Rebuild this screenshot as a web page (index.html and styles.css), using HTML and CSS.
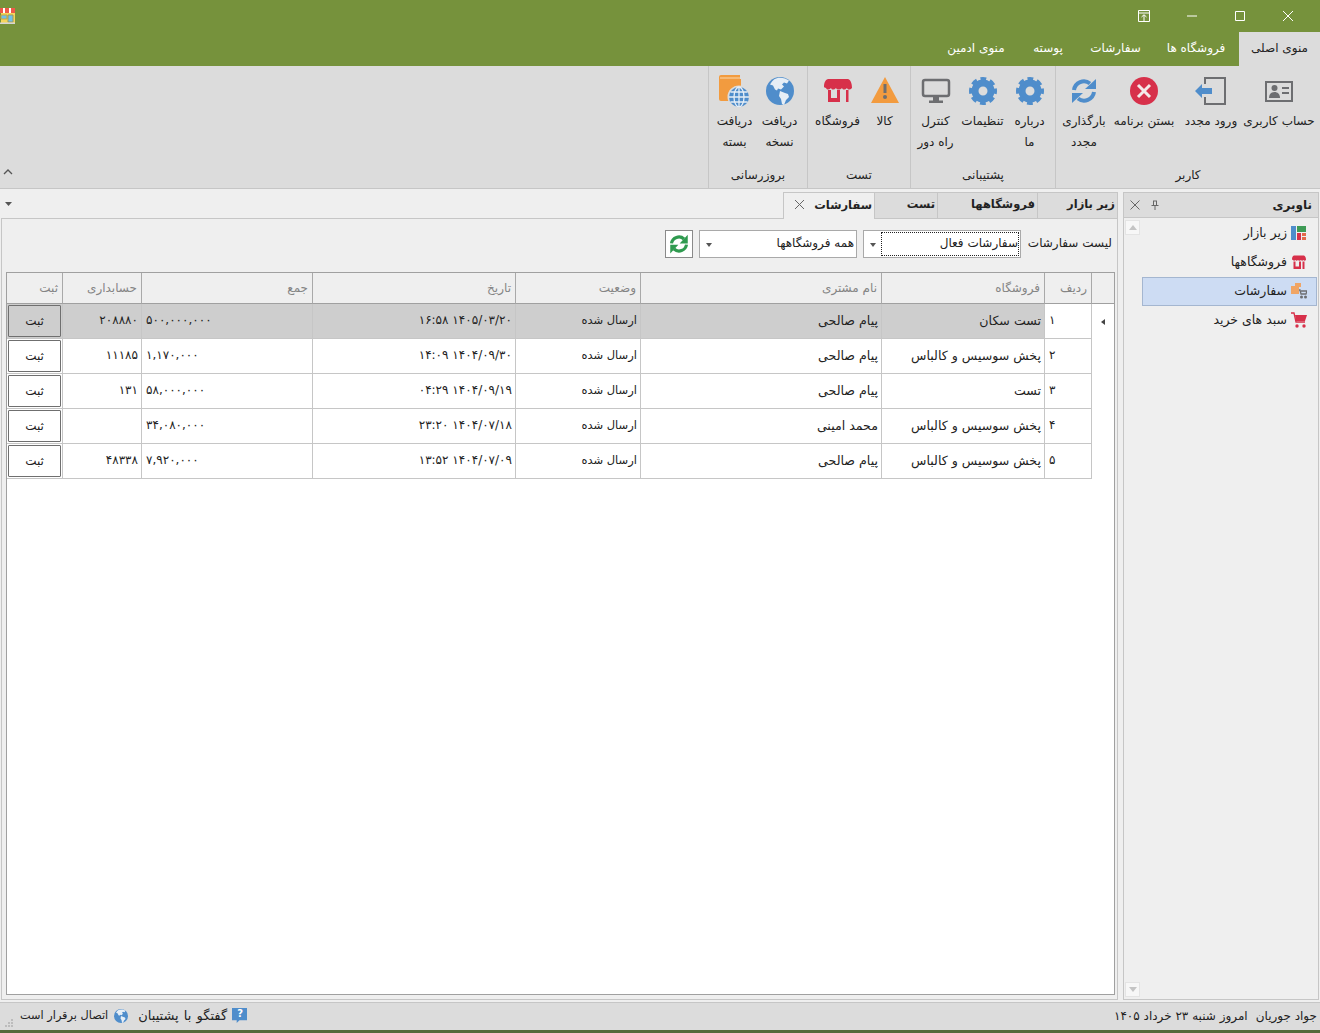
FILE: index.html
```html
<!DOCTYPE html>
<html lang="fa" dir="rtl">
<head>
<meta charset="utf-8">
<title>سفارشات</title>
<link rel="stylesheet" href="styles.css">
</head>
<body>
<svg class="defs" width="0" height="0" aria-hidden="true">
  <defs>
    <symbol id="i-card" viewBox="0 0 32 32"><rect x="3" y="7" width="26" height="19" fill="none" stroke="#6d6e71" stroke-width="2"/><circle cx="11.500" cy="13" r="3" fill="#6d6e71"/><path d="M6 23c0-4 2.500-6 5.500-6s5.500 2 5.500 6z" fill="#6d6e71"/><path d="M19 12h7v2h-7zM19 17h7v2h-7z" fill="#6d6e71"/></symbol>
    <symbol id="i-login" viewBox="0 0 32 32"><path d="M10 9V3h20v26H10v-7" fill="none" stroke="#6d6e71" stroke-width="2"/><path d="M0 16l7-7v4h10v6H7v4z" fill="#4f8dcb"/></symbol>
    <symbol id="i-close" viewBox="0 0 32 32"><circle cx="16" cy="16" r="14" fill="#d7304a"/><path d="M10 10l12 12M22 10L10 22" stroke="#f4e9e9" stroke-width="3" fill="none"/></symbol>
    <symbol id="i-refresh" viewBox="0 0 32 32"><g id="half"><path d="M6 15A10 10 0 0 1 22 8.500" fill="none" stroke="#4f8dcb" stroke-width="4"/><path d="M28 4v10H17z" fill="#4f8dcb"/></g><use href="#half" transform="rotate(180 16 16)"/></symbol>
    <symbol id="i-gear" viewBox="0 0 32 32"><circle cx="16" cy="16" r="8" fill="none" stroke="#4f8dcb" stroke-width="7"/><circle cx="16" cy="16" r="11.500" fill="none" stroke="#4f8dcb" stroke-width="5" stroke-dasharray="5.400 3.630" stroke-dashoffset="2.700"/></symbol>
    <symbol id="i-monitor" viewBox="0 0 32 32"><rect x="3" y="5" width="26" height="16" rx="2" fill="none" stroke="#6d6e71" stroke-width="2.500"/><path d="M13 22h6v3.500h-6zM9 25.500h14V28H9z" fill="#6d6e71"/></symbol>
    <symbol id="i-warn" viewBox="0 0 32 32"><path d="M16 2L30 28H2z" fill="#f29b3f"/><path d="M14.500 9h3v9h-3z" fill="#6d6e71"/><circle cx="16" cy="22" r="2" fill="#6d6e71"/></symbol>
    <symbol id="i-store" viewBox="0 0 32 32"><path d="M6 4h20c3 1 4 5 4 9-2 2-4 2-5 0-2 2-4 2-5 0-2 2-5 2-6 0-2 2-4 2-5 0-2 2-4 2-5 0-1 0-2-1-2-1 0-4 1-7 4-8z" fill="#d7304a"/><path d="M6 15h3v8h6v-8h3v12H6z" fill="#d7304a"/><path d="M24 15h2.500v12H24z" fill="#d7304a"/></symbol>
    <symbol id="i-store2" viewBox="0 0 32 32"><path d="M6 3h20c3 1 4 5 4 9-2 2-4 2-5 0-2 2-4 2-5 0-2 2-5 2-6 0-2 2-4 2-5 0-2 2-4 2-5 0-1 0-2-1-2-1 0-4 1-7 4-8z" fill="#d7304a"/><path d="M5 15h4v10h7V15h4v15H5z" fill="#d7304a"/><path d="M23 15h4v15h-4z" fill="#d7304a"/></symbol>
    <symbol id="i-globe" viewBox="0 0 32 32"><circle cx="16" cy="16" r="14" fill="#4f8dcb"/><path d="M10 4.500c3-2 7-2 11-1l4 2-2 3-3-1-2 2 2 2-3 3-3-1-1 2-2-1-2-4-3-1 2-3z" fill="#e6eef6"/><path d="M16 16l5 2 3 1 1 3-3 3-2 5-2-1-1-5-2-3z" fill="#e6eef6"/></symbol>
    <symbol id="i-book" viewBox="0 0 32 32"><path d="M2 0h19v4h1v15H12v7H2a2 2 0 0 1-2-2V2a2 2 0 0 1 2-2z" fill="#f29b3f"/><path d="M1 3h20" stroke="#fbd9ae" stroke-width="1"/><circle cx="20" cy="22" r="11.500" fill="#dcdcdc"/><circle cx="20" cy="22" r="10" fill="#4f8dcb"/><path d="M20 12v20M10 22h20M11.500 17h17M11.500 27h17" stroke="#e6eef6" stroke-width="1.300"/><ellipse cx="20" cy="22" rx="5" ry="10" fill="none" stroke="#e6eef6" stroke-width="1.300"/></symbol>
    <symbol id="i-tree" viewBox="0 0 16 16"><path d="M0 1h5v14H0z" fill="#4f8dcb"/><path d="M6 1h9v6H6z" fill="#3e9b56"/><path d="M6 8h4v7H6z" fill="#d7304a"/><path d="M11 8h4v3h-4z" fill="#e36a4a"/><path d="M11 12h4v3h-4z" fill="#e36a4a"/></symbol>
    <symbol id="i-orders" viewBox="0 0 16 16"><path d="M0 3h4V0h6v4H8v7H0z" fill="#f0a565"/><path d="M8 7h1l1 4h5l1-3h-6" fill="none" stroke="#6d6e71" stroke-width="1.300"/><circle cx="10.500" cy="14" r="1.500" fill="#6d6e71"/><circle cx="14.500" cy="14" r="1.500" fill="#6d6e71"/></symbol>
    <symbol id="i-cart" viewBox="0 0 16 16"><path d="M0 1h3l2 9h9" fill="none" stroke="#d7304a" stroke-width="1.300"/><path d="M4 3h12l-2 6H5z" fill="#d7304a"/><circle cx="6" cy="14" r="1.700" fill="#d7304a"/><circle cx="13" cy="14" r="1.700" fill="#d7304a"/></symbol>
    <symbol id="i-help" viewBox="0 0 16 16"><path d="M0 0h16v13H8l-3 3v-3H0z" fill="#4f8dcb"/></symbol>
  </defs>
</svg>
<div class="app">
  <header class="titlebar">
    <div class="winbtns">
      <button class="winbtn"><svg width="12" height="12" viewBox="0 0 12 12"><path d="M.5.500h11v11H.5zM.5 3h11M6 11V5M3.500 7L6 4.700 8.500 7" fill="none" stroke="#fff"/></svg></button>
      <button class="winbtn"><svg width="12" height="12" viewBox="0 0 12 12"><path d="M1 6h10" stroke="#fff"/></svg></button>
      <button class="winbtn"><svg width="12" height="12" viewBox="0 0 12 12"><path d="M1.500 1.500h9v9h-9z" fill="none" stroke="#fff"/></svg></button>
      <button class="winbtn"><svg width="12" height="12" viewBox="0 0 12 12"><path d="M1 1l10 10M11 1L1 11" stroke="#fff"/></svg></button>
    </div>
    <svg class="appicon" width="16" height="16" viewBox="0 0 16 16"><path d="M1 5h14v10H1z" fill="#f6d55c"/><path d="M0 0h15v5H0z" fill="#ee5a48"/><path d="M3 0h2v5H3zM9 0h2v5H9z" fill="#fff"/><path d="M1 7h6v4H1z" fill="#6fc0ea" stroke="#c9a53a"/><path d="M8 7h5v7H8z" fill="#6fc0ea" stroke="#9a9a60"/><path d="M0 14.500h15V16H0z" fill="#d5d5d5"/></svg>
  </header>
  <nav class="menutabs">
    <a class="menutab active">منوی اصلی</a>
    <a class="menutab">فروشگاه ها</a>
    <a class="menutab">سفارشات</a>
    <a class="menutab">پوسته</a>
    <a class="menutab">منوی ادمین</a>
  </nav>
  <section class="ribbon">
    <div class="rgroup g-user">
      <div class="ritems">
        <div class="ritem"><svg class="ricon"><use href="#i-card"/></svg><span>حساب کاربری</span></div>
        <div class="ritem"><svg class="ricon"><use href="#i-login"/></svg><span>ورود مجدد</span></div>
        <div class="ritem"><svg class="ricon"><use href="#i-close"/></svg><span>بستن برنامه</span></div>
        <div class="ritem"><svg class="ricon"><use href="#i-refresh"/></svg><span>بارگذاری<br>مجدد</span></div>
      </div>
      <div class="rlabel">کاربر</div>
    </div>
    <div class="rgroup g-support">
      <div class="ritems">
        <div class="ritem"><svg class="ricon"><use href="#i-gear"/></svg><span>درباره<br>ما</span></div>
        <div class="ritem"><svg class="ricon"><use href="#i-gear"/></svg><span>تنظیمات</span></div>
        <div class="ritem"><svg class="ricon"><use href="#i-monitor"/></svg><span>کنترل<br>راه دور</span></div>
      </div>
      <div class="rlabel">پشتیبانی</div>
    </div>
    <div class="rgroup g-test">
      <div class="ritems">
        <div class="ritem"><svg class="ricon"><use href="#i-warn"/></svg><span>کالا</span></div>
        <div class="ritem"><svg class="ricon"><use href="#i-store"/></svg><span>فروشگاه</span></div>
      </div>
      <div class="rlabel">تست</div>
    </div>
    <div class="rgroup g-update">
      <div class="ritems">
        <div class="ritem"><svg class="ricon"><use href="#i-globe"/></svg><span>دریافت<br>نسخه</span></div>
        <div class="ritem"><svg class="ricon"><use href="#i-book"/></svg><span>دریافت<br>بسته</span></div>
      </div>
      <div class="rlabel">بروزرسانی</div>
    </div>
    <svg class="collapse" width="10" height="6" viewBox="0 0 10 6"><path d="M1 5l4-4 4 4" fill="none" stroke="#555" stroke-width="1.300"/></svg>
  </section>
  <main class="main">
    <aside class="nav">
      <div class="navhead">
        <span class="navtitle">ناوبری</span>
        <svg width="10" height="10" viewBox="0 0 10 10"><path d="M3 1h4M3.500 1v4M6.500 1v4M1.500 5.500h7M5 5.500V10" fill="none" stroke="#666"/></svg>
        <svg class="navx" width="10" height="10" viewBox="0 0 10 10"><path d="M.5.500l9 9M9.500.500l-9 9" stroke="#666"/></svg>
      </div>
      <div class="navbody">
        <div class="navlist">
          <div class="navitem"><svg width="16" height="16"><use href="#i-tree"/></svg><span>زیر بازار</span></div>
          <div class="navitem"><svg width="16" height="16"><use href="#i-store2"/></svg><span>فروشگاهها</span></div>
          <div class="navitem selected"><svg width="16" height="16"><use href="#i-orders"/></svg><span>سفارشات</span></div>
          <div class="navitem"><svg width="16" height="16"><use href="#i-cart"/></svg><span>سبد های خرید</span></div>
        </div>
        <div class="navscroll">
          <div class="scrollbtn"><svg width="8" height="5" viewBox="0 0 8 5"><path d="M4 0l4 5H0z" fill="#c4c4c4"/></svg></div>
          <div class="scrollbtn"><svg width="8" height="5" viewBox="0 0 8 5"><path d="M0 0h8L4 5z" fill="#c4c4c4"/></svg></div>
        </div>
      </div>
    </aside>
    <section class="doc">
      <div class="tabstrip">
        <div class="doctab">زیر بازار</div>
        <div class="doctab">فروشگاهها</div>
        <div class="doctab">تست</div>
        <div class="doctab active">سفارشات<svg width="9" height="9" viewBox="0 0 9 9"><path d="M0 0l9 9M9 0L0 9" stroke="#666"/></svg></div>
        <svg class="tabmenu" width="7" height="4" viewBox="0 0 7 4"><path d="M0 0h7L3.500 4z" fill="#555"/></svg>
      </div>
      <div class="docbody">
        <div class="filters">
          <label class="flabel">لیست سفارشات</label>
          <div class="combo focus"><span class="combotext">سفارشات فعال</span><span class="comboarrow"></span></div>
          <div class="combo"><span class="combotext">همه فروشگاهها</span><span class="comboarrow"></span></div>
          <button class="refresh"><svg width="20" height="20" viewBox="0 0 32 32"><g fill="none" stroke="#2f9a4f" stroke-width="5"><path d="M4 15A12 12 0 0 1 24 8"/><path d="M28 17A12 12 0 0 1 8 24"/></g><path d="M30 1v14H17zM2 31V17h13z" fill="#2f9a4f"/></svg></button>
        </div>
        <div class="gridwrap">
          <table class="grid">
            <colgroup>
              <col class="c-ind"><col class="c-no"><col class="c-shop"><col class="c-cust"><col class="c-state"><col class="c-date"><col class="c-sum"><col class="c-acc"><col class="c-btn">
            </colgroup>
            <thead>
              <tr><th></th><th>ردیف</th><th>فروشگاه</th><th>نام مشتری</th><th>وضعیت</th><th>تاریخ</th><th>جمع</th><th>حسابداری</th><th>ثبت</th></tr>
            </thead>
            <tbody>
              <tr class="current"><td class="ind"><span class="arrow"></span></td><td class="no">۱</td><td class="name">تست سکان</td><td class="name">پیام صالحی</td><td class="state">ارسال شده</td><td>۱۴۰۵/۰۳/۲۰ ۱۶:۵۸</td><td class="sum">۵۰۰,۰۰۰,۰۰۰</td><td>۲۰۸۸۸۰</td><td class="act"><button class="save">ثبت</button></td></tr>
              <tr><td class="ind"></td><td class="no">۲</td><td class="name">پخش سوسیس و کالباس</td><td class="name">پیام صالحی</td><td class="state">ارسال شده</td><td>۱۴۰۴/۰۹/۳۰ ۱۴:۰۹</td><td class="sum">۱,۱۷۰,۰۰۰</td><td>۱۱۱۸۵</td><td class="act"><button class="save">ثبت</button></td></tr>
              <tr><td class="ind"></td><td class="no">۳</td><td class="name">تست</td><td class="name">پیام صالحی</td><td class="state">ارسال شده</td><td>۱۴۰۴/۰۹/۱۹ ۰۴:۲۹</td><td class="sum">۵۸,۰۰۰,۰۰۰</td><td>۱۳۱</td><td class="act"><button class="save">ثبت</button></td></tr>
              <tr><td class="ind"></td><td class="no">۴</td><td class="name">پخش سوسیس و کالباس</td><td class="name">محمد امینی</td><td class="state">ارسال شده</td><td>۱۴۰۴/۰۷/۱۸ ۲۳:۲۰</td><td class="sum">۳۴,۰۸۰,۰۰۰</td><td></td><td class="act"><button class="save">ثبت</button></td></tr>
              <tr><td class="ind"></td><td class="no">۵</td><td class="name">پخش سوسیس و کالباس</td><td class="name">پیام صالحی</td><td class="state">ارسال شده</td><td>۱۴۰۴/۰۷/۰۹ ۱۳:۵۲</td><td class="sum">۷,۹۲۰,۰۰۰</td><td>۴۸۳۳۸</td><td class="act"><button class="save">ثبت</button></td></tr>
            </tbody>
          </table>
        </div>
      </div>
    </section>
  </main>
  <footer class="status">
    <span class="st-user">جواد جوریان</span>
    <span class="st-date">امروز شنبه ۲۳ خرداد ۱۴۰۵</span>
    <span class="st-item st-chat"><svg width="15" height="15"><use href="#i-help"/></svg><b class="qmark">?</b>گفتگو با پشتیبان</span>
    <span class="st-item st-conn"><svg width="16" height="16" viewBox="0 0 32 32"><use href="#i-globe"/></svg>اتصال برقرار است</span>
    <svg class="grip" width="10" height="10" viewBox="0 0 10 10"><path d="M7 1h2v2H7zM4 4h2v2H4zM7 4h2v2H7zM1 7h2v2H1zM4 7h2v2H4zM7 7h2v2H7z" fill="#bcbcbc"/></svg>
  </footer>
</div>
</body>
</html>
```
FILE: styles.css
```css
* { box-sizing: border-box; }
html, body { margin: 0; padding: 0; height: 100%; }
body { font-family: "DejaVu Sans", "Noto Sans", sans-serif; font-size: 12px; color: #222; overflow: hidden; background: #efefef; }
button { font: inherit; color: inherit; padding: 0; }
.defs { position: absolute; }
.app { display: flex; flex-direction: column; width: 1320px; height: 1033px; border-bottom: 3px solid #55693a; }

.titlebar { height: 32px; background: #76923c; display: flex; justify-content: space-between; align-items: center; flex-direction: row; }
.winbtns { display: flex; flex-direction: row-reverse; direction: rtl; padding-right: 8px; }
.winbtn { width: 48px; height: 32px; background: none; border: 0; display: flex; align-items: center; justify-content: center; }

.menutabs { height: 34px; background: #76923c; display: flex; }
.menutab { color: #fff; display: flex; align-items: center; justify-content: center; padding-bottom: 2px; }
.menutab:nth-child(1) { width: 81px; }
.menutab:nth-child(2) { width: 86px; }
.menutab:nth-child(3) { width: 75px; }
.menutab:nth-child(4) { width: 60px; }
.menutab:nth-child(5) { width: 84px; }
.menutab.active { background: #dcdcdc; color: #222; }

.ribbon { height: 123px; background: #dcdcdc; border-bottom: 1px solid #c6c6c6; display: flex; }
.rgroup { display: flex; flex-direction: column; border-left: 1px solid #c6c6c6; }
.ritems { flex: 1; display: grid; padding-top: 9px; }
.ritem { display: flex; flex-direction: column; align-items: center; text-align: center; line-height: 21px; }
.ritem span { display: block; margin-top: 4px; white-space: nowrap; }
.ricon { width: 32px; height: 32px; }
.rlabel { height: 23px; text-align: center; line-height: 20px; }
.g-user { width: 265px; }
.g-user .ritems { grid-template-columns: 74px 62px 72px 48px; padding-right: 4px; }
.g-support { width: 145px; }
.g-support .ritems { grid-template-columns: 47px 47px 47px; padding-right: 2px; }
.g-test { width: 103px; }
.g-test .ritems { grid-template-columns: 47px 47px; padding-right: 2px; }
.g-update { width: 99px; }
.g-update .ritems { grid-template-columns: 45px 45px; padding-right: 5px; }
.collapse { margin-right: auto; margin-left: 3px; margin-top: 103px; }

.main { flex: 1; display: flex; padding: 3px 1px 2px 1px; gap: 5px; min-height: 0; }

.nav { width: 196px; display: flex; flex-direction: column; border: 1px solid #c6c6c6; }
.navhead { height: 25px; flex: none; background: #dcdcdc; border-bottom: 1px solid #c6c6c6; display: flex; align-items: center; gap: 10px; padding: 0 6px; }
.navtitle { font-weight: bold; margin-left: auto; }
.navbody { flex: 1; display: flex; min-height: 0; }
.navlist { flex: 1; display: flex; flex-direction: column; padding-top: 1px; font-size: 12.500px; }
.navitem { height: 29px; display: flex; align-items: center; gap: 4px; padding: 0 11px 2px 0; }
.navitem.selected { background: #cddcf3; border: 1px solid #a4b6d0; padding-right: 9px; margin-right: 1px; }
.navscroll { width: 18px; flex: none; display: flex; flex-direction: column; justify-content: space-between; padding: 2px; }
.scrollbtn { width: 15px; height: 15px; background: #f7f7f7; border: 1px solid #e4e4e4; display: flex; align-items: center; justify-content: center; }

.doc { flex: 1; display: flex; flex-direction: column; min-width: 0; }
.tabstrip { height: 27px; flex: none; display: flex; align-items: flex-end; position: relative; z-index: 1; }
.doctab { height: 27px; border: 1px solid #c6c6c6; border-left: 0; background: #dcdcdc; font-weight: bold; font-size: 11.500px; display: flex; align-items: center; padding: 0 2px 3px; justify-content: flex-start; }
.doctab:nth-child(1) { width: 80px; }
.doctab:nth-child(2) { width: 100px; }
.doctab:nth-child(3) { width: 63px; }
.doctab.active { width: 92px; background: #efefef; border-left: 1px solid #c6c6c6; border-bottom: 0; justify-content: space-between; padding-left: 11px; }
.tabmenu { margin-right: auto; margin-left: 4px; margin-bottom: 3px; align-self: center; }
.docbody { flex: 1; border: 1px solid #c6c6c6; margin-top: -1px; padding: 11px 2px 4px 4px; display: flex; flex-direction: column; gap: 14px; min-height: 0; }

.filters { display: flex; align-items: center; height: 28px; gap: 6px; padding-right: 3px; }
.flabel { width: 84px; white-space: nowrap; padding-bottom: 2px; margin-left: 1px; }
.combo { width: 158px; height: 28px; background: #fff; border: 1px solid #a9a9a9; display: flex; align-items: center; padding: 1px; }
.combotext { flex: 1; align-self: stretch; display: flex; align-items: center; padding: 0 1px 2px 0; }
.combo.focus .combotext { outline: 1px dotted #222; outline-offset: -1px; }
.comboarrow { width: 16px; align-self: stretch; position: relative; }
.comboarrow::after { content: ""; position: absolute; left: 5px; top: 11px; border: 3.500px solid transparent; border-top: 4px solid #555; border-bottom: 0; }
.refresh { width: 28px; height: 28px; background: #fff; border: 1px solid #8a8a8a; display: flex; align-items: center; justify-content: center; }

.gridwrap { flex: 1; background: #fff; border: 1px solid #a0a0a0; min-height: 0; }
.grid { width: 100%; table-layout: fixed; border-collapse: separate; border-spacing: 0; }
.c-ind { width: 23px; } .c-no { width: 47px; } .c-shop { width: 163px; } .c-cust { width: 241px; } .c-state { width: 125px; } .c-date { width: 203px; } .c-sum { width: 171px; } .c-acc { width: 79px; } .c-btn { width: 55px; }
.grid th { height: 31px; background: #efefef; color: #858585; font-weight: normal; text-align: right; padding: 0 4px; border-left: 1px solid #a9a9a9; border-bottom: 1px solid #a0a0a0; }
.grid th:last-child { border-left: 0; }
.grid td { height: 35px; padding: 0 3px 2px; border-left: 1px solid #c6c6c6; border-bottom: 1px solid #c6c6c6; background: #fff; white-space: nowrap; }
.grid td:last-child { border-left: 0; }
.grid td.ind { border-bottom: 0; text-align: center; }
.grid td.no { text-align: left; padding-left: 4px; }
.grid td.name { font-size: 12.600px; }
.grid td.state { font-size: 11.500px; }
.grid td.sum { text-align: left; padding-left: 5px; direction: ltr; }
.grid td.act { padding: 0; }
.current td { background: #cecece; }
.current td.no, .current td.ind { background: #fff; }
.arrow { display: inline-block; border: 3px solid transparent; border-left: 0; border-right: 4px solid #444; }
.save { display: block; width: 53px; height: 32px; margin: 0 auto; background: #fff; border: 1px solid #6f6f6f; border-radius: 1px; }
.current .save { background: #cecece; }

.status { height: 28px; flex: none; background: #dcdcdc; border-top: 1px solid #c6c6c6; display: flex; align-items: center; padding: 0 3px 2px; }
.st-user { margin-left: 8px; }
.st-item { display: inline-flex; align-items: center; gap: 5px; position: relative; }
.st-chat { margin-right: auto; margin-left: 9px; font-size: 13px; word-spacing: 1px; }
.st-conn { font-size: 11.300px; }
.qmark { position: absolute; right: 4px; top: 0; color: #fff; font-size: 10px; }
.grip { margin-right: 6px; margin-left: 1px; align-self: flex-end; margin-bottom: 0; }
```
